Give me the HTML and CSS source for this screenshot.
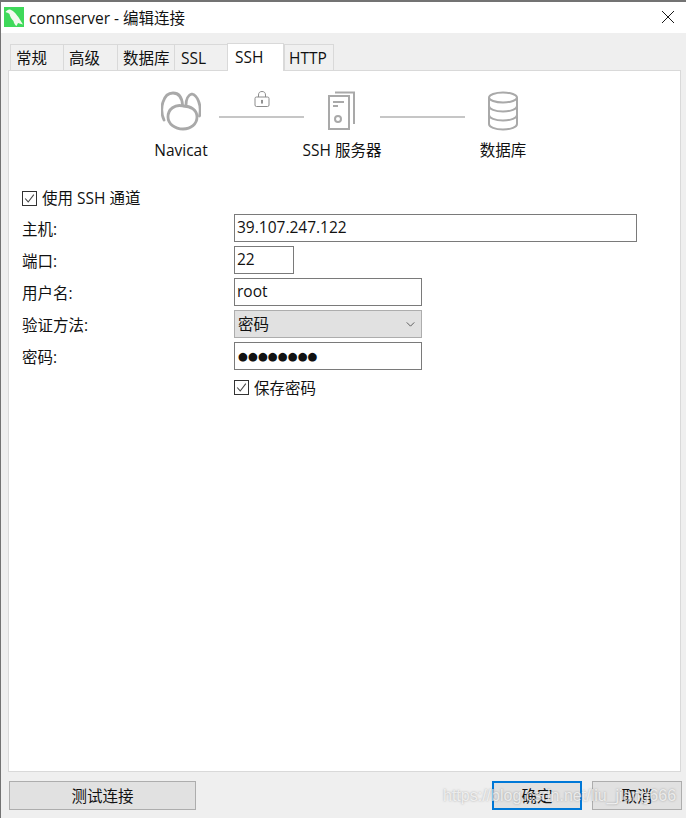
FILE: index.html
```html
<!DOCTYPE html>
<html lang="zh-CN">
<head>
<meta charset="utf-8">
<title>connserver - 编辑连接</title>
<link rel="stylesheet" href="styles.css">
</head>
<body>
<div class="window">
  <header class="titlebar">
    <svg class="app-icon" viewBox="0 0 20 20" aria-hidden="true">
      <rect width="20" height="20" fill="#3fd95a"/>
      <path d="M1.500 5 C3 3 5 2 7 3 C10 4 13 8 15 11 C16 13 17.500 15 19 17.500 C17 17 15.500 16.500 14 16 L12.500 19 C11 18 10 16.500 9.500 14 C7 12 6 9 5.500 7 C4 6 3 5.500 1.500 5 Z" fill="#f2f9ee"/>
    </svg>
    <span class="title">connserver - 编辑连接</span>
    <svg class="close" viewBox="0 0 14 14" aria-hidden="true"><path d="M1 1 L13 13 M13 1 L1 13" stroke="#1a1a1a" stroke-width="1" fill="none"/></svg>
  </header>
  <div class="content">
    <nav class="tabs">
      <div class="tab t1">常规</div>
      <div class="tab t2">高级</div>
      <div class="tab t3">数据库</div>
      <div class="tab t4">SSL</div>
      <div class="tab t5 active">SSH</div>
      <div class="tab t6">HTTP</div>
    </nav>
    <main class="panel">
      <div class="diagram">
        <div class="node">
          <svg class="node-icon" viewBox="0 0 40 40" aria-hidden="true">
            <g fill="none" stroke="#a9a9a9" stroke-width="2.800" stroke-linecap="round">
              <path d="M3 29 C-2 18 2 2 12 2 C18 2 21 7 21.500 14"/>
              <path d="M38.500 25 C41 14 36 4 31 3 C27 4 25 9 25 14"/>
              <path d="M22 15 C14 13 7 18 7 26 C7 33 14 38 22 38 C30 38 36 33 36 26 C36 19 30 15 22 15 Z"/>
            </g>
          </svg>
          <span class="node-label">Navicat</span>
        </div>
        <div class="link">
          <svg class="lock" viewBox="0 0 16 16" aria-hidden="true">
            <path d="M4.500 6 V4 C4.500 1.500 6 .5 8 .5 C10 .5 11.500 1.500 11.500 4 V6" fill="none" stroke="#8c8c8c" stroke-width="1"/>
            <rect x="1" y="6" width="14" height="9.500" rx="1.500" fill="none" stroke="#8c8c8c" stroke-width="1"/>
            <path d="M8 9.500 V12" stroke="#777" stroke-width="1.600" stroke-linecap="round"/>
          </svg>
          <div class="line"></div>
        </div>
        <div class="node">
          <svg class="node-icon" viewBox="0 0 40 40" aria-hidden="true">
            <g fill="none" stroke="#a9a9a9" stroke-width="2">
              <path d="M13 1.500 H32 V33"/>
              <rect x="7" y="5" width="20" height="33"/>
              <path d="M11 11 H22 M11 15 H16"/>
              <circle cx="16" cy="28" r="3"/>
            </g>
          </svg>
          <span class="node-label">SSH 服务器</span>
        </div>
        <div class="link">
          <div class="line"></div>
        </div>
        <div class="node">
          <svg class="node-icon" viewBox="0 0 40 40" aria-hidden="true">
            <g fill="none" stroke="#a9a9a9" stroke-width="2">
              <ellipse cx="20" cy="6.500" rx="14" ry="5"/>
              <path d="M6 6.500 V33 C6 36 12 38.500 20 38.500 C28 38.500 34 36 34 33 V6.500"/>
              <path d="M6 15 C6 18 12 20.500 20 20.500 C28 20.500 34 18 34 15"/>
              <path d="M6 24 C6 27 12 29.500 20 29.500 C28 29.500 34 27 34 24"/>
            </g>
          </svg>
          <span class="node-label">数据库</span>
        </div>
      </div>

      <label class="check use-ssh">
        <span class="box"><svg viewBox="0 0 15 15" aria-hidden="true"><path d="M2.500 7.500 L6 11.500 L12.500 3" fill="none" stroke="#444" stroke-width="1.200"/></svg></span>
        <span>使用 SSH 通道</span>
      </label>

      <div class="form">
        <span class="field-label">主机:</span>
        <div class="input w-host">39.107.247.122</div>
        <span class="field-label">端口:</span>
        <div class="input w-port">22</div>
        <span class="field-label">用户名:</span>
        <div class="input w-mid">root</div>
        <span class="field-label">验证方法:</span>
        <div class="input w-mid select">
          <span>密码</span>
          <svg class="chev" viewBox="0 0 10 6" aria-hidden="true"><path d="M.5 .5 L5 5 L9.500 .5" fill="none" stroke="#444" stroke-width="1"/></svg>
        </div>
        <span class="field-label">密码:</span>
        <div class="input w-mid password">●●●●●●●●</div>
        <span></span>
        <label class="check save">
          <span class="box"><svg viewBox="0 0 15 15" aria-hidden="true"><path d="M2.500 7.500 L6 11.500 L12.500 3" fill="none" stroke="#444" stroke-width="1.200"/></svg></span>
          <span>保存密码</span>
        </label>
      </div>
    </main>
    <footer class="actions">
      <button class="btn test" type="button">测试连接</button>
      <div class="right">
        <button class="btn ok" type="button">确定</button>
        <button class="btn cancel" type="button">取消</button>
      </div>
    </footer>
  </div>
  <div class="watermark">https://blog.csdn.net/liu_jiang666</div>
</div>
</body>
</html>
```
FILE: styles.css
```css
* { box-sizing: border-box; }
html, body { margin: 0; padding: 0; }
body {
  width: 686px;
  height: 818px;
  overflow: hidden;
  background: #fff;
  font-family: "Open Sans", "Noto Sans CJK SC", sans-serif;
  font-size: 15.500px;
  color: #111;
}
.window {
  position: relative;
  width: 686px;
  height: 818px;
  display: flex;
  flex-direction: column;
  border-top: 2px solid #737373;
  border-left: 1px solid #737373;
}
.titlebar {
  height: 31px;
  flex: none;
  background: #fff;
  display: flex;
  align-items: center;
  padding: 0 9px 1px 3px;
  gap: 5px;
}
.app-icon { width: 20px; height: 20px; flex: none; }
.title { flex: 1; }
.close { width: 14px; height: 14px; flex: none; margin-right: 2px; }
.content {
  flex: 1;
  background: #efefef;
  display: flex;
  flex-direction: column;
  padding: 9px 4px 0 7px;
}
.tabs {
  display: flex;
  height: 28px;
  padding-left: 2px;
  align-items: flex-end;
  position: relative;
  z-index: 1;
}
.tab {
  height: 26px;
  background: #f0f0f0;
  border: 1px solid #d9d9d9;
  border-bottom: 0;
  border-right: 0;
  padding: 0 0 0 5px;
  line-height: 27px;
}
.t1 { width: 53px; }
.t2 { width: 54px; }
.t3 { width: 57px; }
.t4 { width: 53px; padding-left: 6px; }
.t6 { width: 50px; border-right: 1px solid #d9d9d9; padding-left: 4px; }
.tab.active {
  width: 57px;
  height: 28px;
  background: #fff;
  border-right: 1px solid #d9d9d9;
  padding: 0 0 0 7px;
  margin-bottom: -1px;
  line-height: 26px;
}
.panel {
  height: 702px;
  width: 673px;
  flex: none;
  background: #fff;
  border: 1px solid #d9d9d9;
  padding: 20px 0 0 13px;
}
.diagram {
  display: grid;
  grid-template-columns: 76px 85px 76px 85px 76px;
  margin-left: 121px;
  height: 100px;
}
.node {
  display: flex;
  flex-direction: column;
  align-items: center;
  white-space: nowrap;
}
.node-icon { width: 40px; height: 40px; flex: none; }
.node-label { margin-top: 8px; line-height: 22px; }
.link {
  display: flex;
  flex-direction: column;
  align-items: center;
  height: 27px;
  justify-content: flex-end;
}
.lock { width: 16px; height: 16px; margin-bottom: 9px; }
.line { width: 85px; height: 2px; background: #c6c6c6; flex: none; }
.check {
  display: flex;
  align-items: center;
  gap: 5px;
  height: 18px;
  line-height: 18px;
}
.use-ssh { margin-top: -2px; }
.box {
  width: 15px;
  height: 15px;
  border: 1px solid #333;
  background: #fff;
  flex: none;
  display: block;
}
.box svg { display: block; width: 13px; height: 13px; }
.form {
  display: grid;
  grid-template-columns: 212px 1fr;
  grid-auto-rows: 28px;
  row-gap: 4px;
  margin-top: 7px;
  align-items: center;
}
.field-label { height: 28px; line-height: 26px; padding-top: 2px; }
.input {
  height: 28px;
  border: 1px solid #7a7a7a;
  background: #fff;
  padding: 0 2px;
  line-height: 24px;
  white-space: nowrap;
}
.w-host { width: 403px; }
.w-port { width: 60px; }
.w-mid { width: 188px; }
.select {
  background: #e1e1e1;
  border-color: #adadad;
  display: flex;
  align-items: center;
  justify-content: space-between;
  padding: 0 6px 0 3px;
}
.chev { width: 9px; height: 5px; flex: none; }
.password {
  font-size: 11.400px;
  font-family: "DejaVu Sans", sans-serif;
  padding-left: 3px;
  line-height: 26px;
}
.save { margin-top: -1px; }
.actions {
  display: flex;
  justify-content: space-between;
  padding: 9px 0 0 1px;
}
.right { display: flex; gap: 10px; }
.btn {
  font: inherit;
  color: #111;
  height: 29px;
  background: #e1e1e1;
  border: 1px solid #adadad;
  padding: 0;
  line-height: 24px;
}
.test { width: 187px; }
.ok { width: 90px; border: 2px solid #0078d7; }
.cancel { width: 90px; }
.watermark {
  position: absolute;
  left: 442px;
  top: 785px;
  font-family: "Liberation Sans", sans-serif;
  font-size: 16px;
  color: rgba(255, 255, 255, .72);
  text-shadow: 0 0 2px rgba(90, 90, 90, .5);
  white-space: nowrap;
  pointer-events: none;
}
```
